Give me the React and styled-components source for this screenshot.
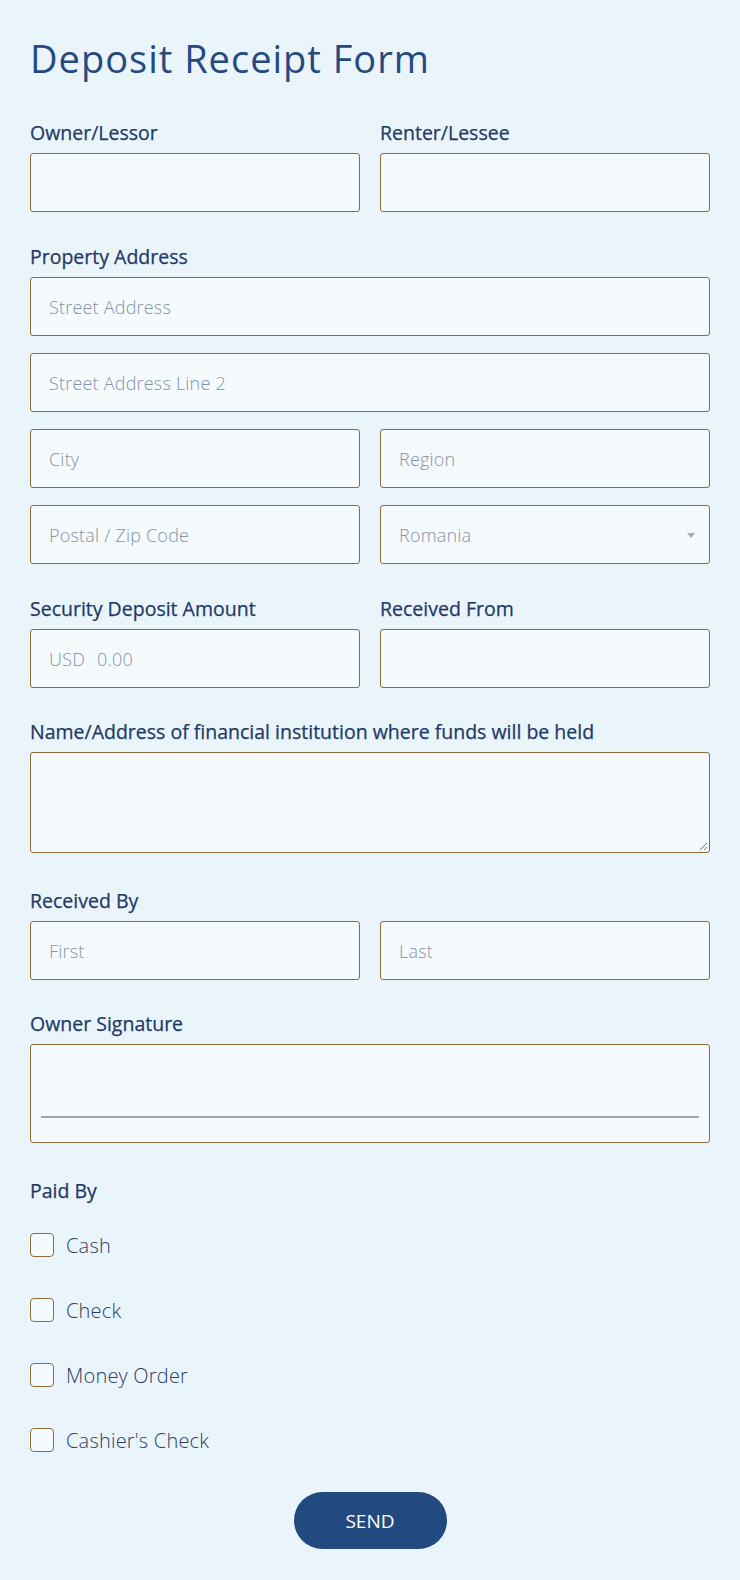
import React from "react";
import styled, { createGlobalStyle } from "styled-components";

const Global = createGlobalStyle`
  html, body { margin: 0; padding: 0; background: #eaf4fb; }
  * { box-sizing: border-box; }
`;

const Page = styled.div`
  background: #eaf4fb;
  min-height: 1580px;
  padding: 33px 30px 30px 30px;
  font-family: "Open Sans", "Noto Sans", sans-serif;
  color: #233e6e;
`;

const Title = styled.h1`
  margin: 0 0 39px 0;
  font-family: "Open Sans", sans-serif;
  font-weight: 400;
  font-size: 38px;
  line-height: 50px;
  color: #264a80;
  letter-spacing: 1px;
`;

const Group = styled.div`
  margin-bottom: ${(p) => p.$gap ?? 34}px;
`;

const Label = styled.div`
  font-size: 19.5px;
  line-height: 22px;
  font-weight: 500;
  color: #1f3966;
  margin-bottom: 9px;
  -webkit-text-stroke: 0.25px #1f3966;
`;

const Row = styled.div`
  display: grid;
  grid-template-columns: 1fr 1fr;
  column-gap: 20px;
  margin-bottom: ${(p) => p.$mb ?? 0}px;
`;

const Stack = styled.div`
  display: flex;
  flex-direction: column;
  gap: 17px;
`;

const Box = styled.div`
  height: ${(p) => p.$h ?? 59}px;
  background: #f5fafd;
  border: 1px solid #8b6d3c;
  border-radius: 3px;
  display: flex;
  align-items: center;
  padding: 0 18px;
  font-size: 18px;
  letter-spacing: 0.2px;
  color: #8592a7;
  font-weight: 300;
  position: relative;
`;

const Prefix = styled.span`
  margin-right: 12px;
`;

const Caret = styled.span`
  position: absolute;
  right: 14px;
  top: 50%;
  margin-top: -2px;
  width: 0;
  height: 0;
  border-left: 4.5px solid transparent;
  border-right: 4.5px solid transparent;
  border-top: 5px solid #a3acb9;
`;

const Resize = styled.svg`
  position: absolute;
  right: 1px;
  bottom: 1px;
`;

const SigLine = styled.div`
  position: absolute;
  left: 10px;
  right: 10px;
  top: 71px;
  height: 2px;
  background: #a3a7ab;
`;

const Checks = styled.div`
  display: flex;
  flex-direction: column;
  gap: 41px;
  margin-top: 31px;
`;

const CheckRow = styled.label`
  display: flex;
  align-items: center;
  gap: 12px;
  font-size: 20px;
  letter-spacing: 0.2px;
  font-weight: 300;
  color: #2b3f63;
  height: 24px;
`;

const CheckBox = styled.span`
  width: 24px;
  height: 24px;
  border: 1px solid #8b6d3c;
  border-radius: 4px;
  background: #f5fafd;
  flex: none;
`;

const ButtonWrap = styled.div`
  display: flex;
  justify-content: center;
  margin-top: 40px;
`;

const Send = styled.button`
  width: 153px;
  height: 57px;
  border: none;
  border-radius: 29px;
  background: #234a80;
  color: #ffffff;
  font-family: "Open Sans", sans-serif;
  font-size: 19px;
  font-weight: 400;
`;

export default function App() {
  return (
    <>
      <Global />
      <Page>
        <Title>Deposit Receipt Form</Title>

        <Row $mb={34}>
          <div>
            <Label>Owner/Lessor</Label>
            <Box />
          </div>
          <div>
            <Label>Renter/Lessee</Label>
            <Box />
          </div>
        </Row>

        <Group>
          <Label>Property Address</Label>
          <Stack>
            <Box>Street Address</Box>
            <Box>Street Address Line 2</Box>
            <Row>
              <Box>City</Box>
              <Box>Region</Box>
            </Row>
            <Row>
              <Box>Postal / Zip Code</Box>
              <Box>
                Romania
                <Caret />
              </Box>
            </Row>
          </Stack>
        </Group>

        <Row $mb={33}>
          <div>
            <Label>Security Deposit Amount</Label>
            <Box>
              <Prefix>USD</Prefix>0.00
            </Box>
          </div>
          <div>
            <Label>Received From</Label>
            <Box />
          </div>
        </Row>

        <Group $gap={37}>
          <Label>Name/Address of financial institution where funds will be held</Label>
          <Box $h={101}>
            <Resize width="10" height="10" viewBox="0 0 10 10">
              <path d="M9 2 L2 9 M9 6 L6 9" stroke="#777" strokeWidth="1" />
            </Resize>
          </Box>
        </Group>

        <Group $gap={33}>
          <Label>Received By</Label>
          <Row>
            <Box>First</Box>
            <Box>Last</Box>
          </Row>
        </Group>

        <Group $gap={37}>
          <Label>Owner Signature</Label>
          <Box $h={99}>
            <SigLine />
          </Box>
        </Group>

        <div>
          <Label>Paid By</Label>
          <Checks>
            <CheckRow><CheckBox />Cash</CheckRow>
            <CheckRow><CheckBox />Check</CheckRow>
            <CheckRow><CheckBox />Money Order</CheckRow>
            <CheckRow><CheckBox />Cashier's Check</CheckRow>
          </Checks>
        </div>

        <ButtonWrap>
          <Send>SEND</Send>
        </ButtonWrap>
      </Page>
    </>
  );
}
